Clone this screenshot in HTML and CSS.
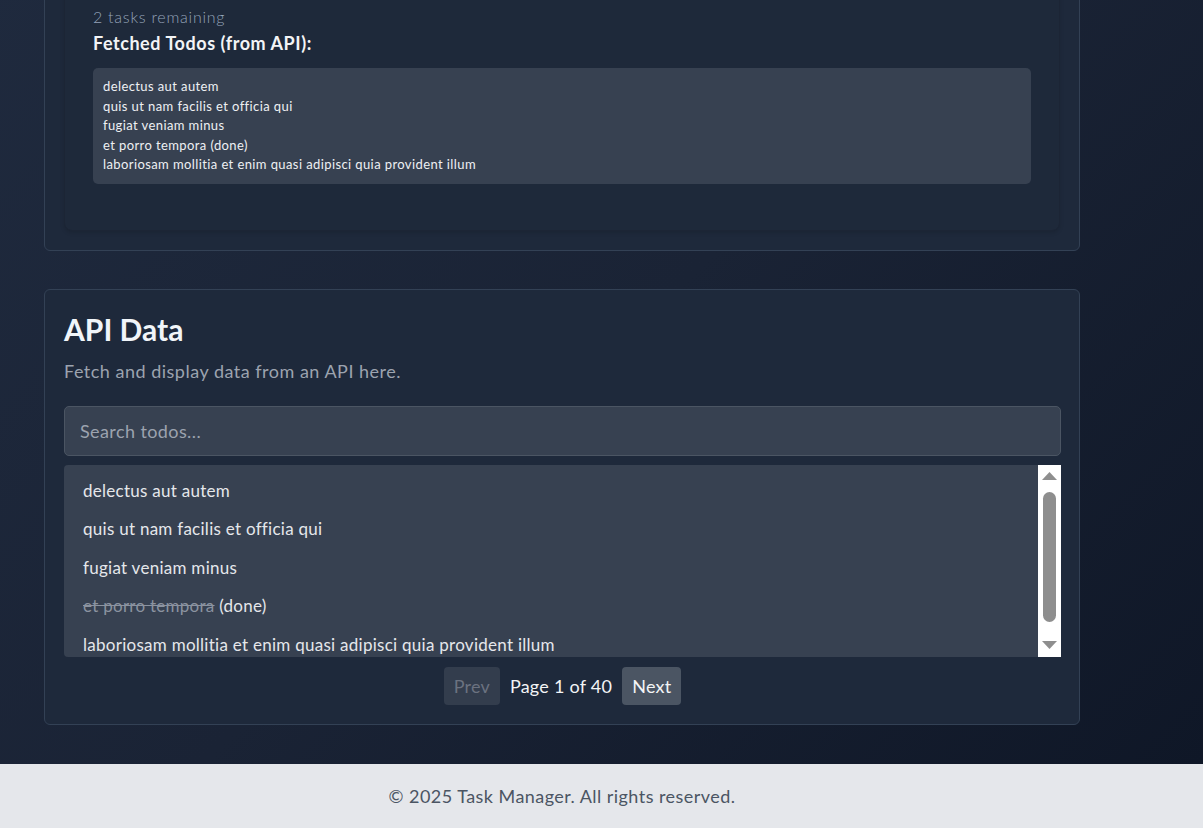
FILE: index.html
```html
<!DOCTYPE html>
<html lang="en">
<head>
<meta charset="utf-8">
<title>Task Manager</title>
<link rel="stylesheet" href="styles.css">
</head>
<body>
<div class="page">
  <main class="container">
    <section class="card card-todos">
      <div class="todo-panel">
        <p class="remaining">2 tasks remaining</p>
        <h3 class="fetched-title">Fetched Todos (from API):</h3>
        <pre class="fetched">delectus aut autem
quis ut nam facilis et officia qui
fugiat veniam minus
et porro tempora (done)
laboriosam mollitia et enim quasi adipisci quia provident illum</pre>
      </div>
    </section>

    <section class="card card-api">
      <h2 class="card-title">API Data</h2>
      <p class="card-sub">Fetch and display data from an API here.</p>
      <input class="search" type="text" placeholder="Search todos...">
      <div class="todo-box">
        <ul class="todo-list">
          <li>delectus aut autem</li>
          <li>quis ut nam facilis et officia qui</li>
          <li>fugiat veniam minus</li>
          <li><span class="done">et porro tempora</span> (done)</li>
          <li>laboriosam mollitia et enim quasi adipisci quia provident illum</li>
        </ul>
        <div class="scrollbar" aria-hidden="true">
          <svg class="sb-arrow" width="15" height="8" viewBox="0 0 15 8"><path d="M7.5 0 L15 8 L0 8 Z" fill="#8e8e8e"/></svg>
          <div class="sb-thumb"></div>
          <svg class="sb-arrow sb-down" width="15" height="8" viewBox="0 0 15 8"><path d="M0 0 L15 0 L7.5 8 Z" fill="#8e8e8e"/></svg>
        </div>
      </div>
      <div class="pager">
        <button class="pager-btn" disabled>Prev</button>
        <span class="pager-info">Page 1 of 40</span>
        <button class="pager-btn active">Next</button>
      </div>
    </section>
  </main>
</div>
<footer class="footer">
  <div class="footer-inner">© 2025 Task Manager. All rights reserved.</div>
</footer>
</body>
</html>
```

FILE: styles.css
```css
* { box-sizing: border-box; }

html, body {
  margin: 0;
  padding: 0;
}

body {
  font-family: "Lato", "Liberation Sans", sans-serif;
  color: #e5e7eb;
  background: #e5e7eb;
}

.page {
  background: linear-gradient(135deg, #1f2a3e 0%, #1a2335 50%, #0f1727 100%);
  padding: 0 123px 39px 44px;
}

.container {
  display: flex;
  flex-direction: column;
  gap: 38px;
  margin-top: -37px;
}

.card {
  background: #1e293b;
  border: 1px solid #334155;
  border-radius: 6px;
  padding: 20px 18px 19px 19px;
}

.todo-panel {
  background: #1e293a;
  border: 1px solid #1c2535;
  border-radius: 8px;
  box-shadow: 0 2px 4px rgba(0, 0, 0, 0.12);
  padding: 20px 28px 27px;
  margin-right: 1px;
}

.remaining {
  margin: 0;
  font-size: 16px;
  line-height: 24px;
  font-weight: 300;
  letter-spacing: 0.75px;
  color: #94a3b8;
}

.fetched-title {
  margin: 2px 0 13px;
  font-size: 18px;
  line-height: 24px;
  font-weight: 700;
  letter-spacing: 0.55px;
  color: #f3f4f6;
}

.fetched {
  margin: 0 0 19px;
  background: #374151;
  border-radius: 5px;
  padding: 9px 10px;
  font-family: "Lato", "Liberation Sans", sans-serif;
  font-size: 13px;
  line-height: 19.5px;
  letter-spacing: 0.4px;
  color: #eef0f3;
  white-space: pre;
}

.card-api {
  padding-top: 21px;
  padding-bottom: 19px;
}

.card-title {
  margin: 0 0 11px;
  font-size: 30px;
  line-height: 36px;
  font-weight: 700;
  color: #f1f5f9;
}

.card-sub {
  margin: 0 0 21px;
  font-size: 18px;
  line-height: 27px;
  letter-spacing: 0.5px;
  color: #9ca3af;
}

.search {
  display: block;
  width: 100%;
  height: 50px;
  margin: 0 0 9px;
  padding: 0 15px;
  background: #374151;
  border: 1px solid #4b5563;
  border-radius: 5px;
  font-family: inherit;
  font-size: 18px;
  letter-spacing: 0.4px;
  color: #e5e7eb;
  outline: none;
}

.search::placeholder {
  color: #9ca3af;
}

.todo-box {
  display: flex;
  height: 192px;
  background: #374151;
  border-radius: 4px 0 0 4px;
  overflow: hidden;
}

.todo-list {
  flex: 1;
  list-style: none;
  margin: 0;
  padding: 7px 0 0;
  overflow: hidden;
}

.todo-list li {
  padding: 8px 19px;
  font-size: 17px;
  line-height: 22.5px;
  letter-spacing: 0.27px;
  color: #e5e7eb;
}

.todo-list .done {
  color: #8b93a0;
  text-decoration: line-through;
}

.scrollbar {
  width: 23px;
  flex: none;
  background: #ffffff;
  display: flex;
  flex-direction: column;
  align-items: center;
  padding: 7px 0 8px;
}

.sb-arrow {
  display: block;
  flex: none;
}

.sb-thumb {
  width: 13px;
  height: 130px;
  margin-top: 12px;
  border-radius: 7px;
  background: #8e8e8e;
}

.sb-down {
  margin-top: 19px;
}

.pager {
  display: flex;
  justify-content: center;
  align-items: center;
  gap: 10px;
  margin-top: 10px;
}

.pager-btn {
  height: 38px;
  padding: 0 10px;
  border: none;
  border-radius: 4px;
  font-family: inherit;
  font-size: 18px;
  letter-spacing: 0.2px;
  background: #4b5563;
  color: #f3f4f6;
}

.pager-btn:disabled {
  background: #333d4d;
  color: #6b7280;
}

.pager-info {
  font-size: 18px;
  letter-spacing: 0.25px;
  color: #f3f4f6;
}

.footer {
  background: #e5e7eb;
  height: 64px;
  padding: 20px 123px 20px 44px;
}

.footer-inner {
  text-align: center;
  font-size: 18px;
  line-height: 24px;
  letter-spacing: 0.45px;
  color: #4b5563;
}
```
